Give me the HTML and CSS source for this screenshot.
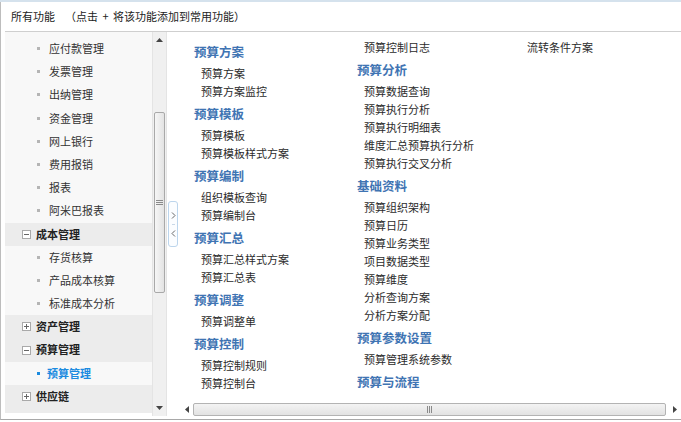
FILE: index.html
```html
<!DOCTYPE html>
<html>
<head>
<meta charset="utf-8">
<title>所有功能</title>
<link rel="stylesheet" href="styles.css">
</head>
<body>
<div class="page">
  <div class="backdrop"><div class="backdrop__panel"></div></div>
  <div class="dialog">
    <div class="header"><span class="header__title">所有功能</span><span class="header__hint">（点击&nbsp;+&nbsp;将该功能添加到常用功能）</span></div>
    <div class="main">
      <div class="sidebar">
        <div class="menu__item"><i class="dot"></i>应付款管理</div>
        <div class="menu__item"><i class="dot"></i>发票管理</div>
        <div class="menu__item"><i class="dot"></i>出纳管理</div>
        <div class="menu__item"><i class="dot"></i>资金管理</div>
        <div class="menu__item"><i class="dot"></i>网上银行</div>
        <div class="menu__item"><i class="dot"></i>费用报销</div>
        <div class="menu__item"><i class="dot"></i>报表</div>
        <div class="menu__item"><i class="dot"></i>阿米巴报表</div>
        <div class="menu__group"><svg class="fold" width="9" height="9" viewBox="0 0 9 9"><rect x="0.5" y="0.5" width="8" height="8" fill="#fff" stroke="#a9a9a9"/><path d="M2 4.5h5" stroke="#666"/></svg>成本管理</div>
        <div class="menu__item"><i class="dot"></i>存货核算</div>
        <div class="menu__item"><i class="dot"></i>产品成本核算</div>
        <div class="menu__item"><i class="dot"></i>标准成本分析</div>
        <div class="menu__group"><svg class="fold" width="9" height="9" viewBox="0 0 9 9"><rect x="0.5" y="0.5" width="8" height="8" fill="#fff" stroke="#a9a9a9"/><path d="M2 4.5h5M4.5 2v5" stroke="#666"/></svg>资产管理</div>
        <div class="menu__group"><svg class="fold" width="9" height="9" viewBox="0 0 9 9"><rect x="0.5" y="0.5" width="8" height="8" fill="#fff" stroke="#a9a9a9"/><path d="M2 4.5h5" stroke="#666"/></svg>预算管理</div>
        <div class="menu__item menu__item--active"><i class="dot"></i>预算管理</div>
        <div class="menu__group menu__group--last"><svg class="fold" width="9" height="9" viewBox="0 0 9 9"><rect x="0.5" y="0.5" width="8" height="8" fill="#fff" stroke="#a9a9a9"/><path d="M2 4.5h5M4.5 2v5" stroke="#666"/></svg>供应链</div>
      </div>
      <div class="vscroll">
        <div class="vscroll__btn"><svg width="7" height="4" viewBox="0 0 7 4"><path d="M0 4L3.5 0L7 4Z" fill="#444"/></svg></div>
        <div class="vscroll__track">
          <div class="vscroll__thumb"><svg width="7" height="5" viewBox="0 0 7 5"><path d="M0 0.5h7M0 2.5h7M0 4.5h7" stroke="#8a8a8a"/></svg></div>
        </div>
        <div class="vscroll__btn"><svg width="7" height="4" viewBox="0 0 7 4"><path d="M0 0L3.5 4L7 0Z" fill="#444"/></svg></div>
      </div>
      <div class="splitter">
        <div class="toggle">
          <svg width="5" height="7" viewBox="0 0 5 7"><path d="M1 0.5L4 3.5L1 6.5" fill="none" stroke="#666"/></svg>
          <i class="toggle__sep"></i>
          <svg width="5" height="7" viewBox="0 0 5 7"><path d="M4 0.5L1 3.5L4 6.5" fill="none" stroke="#666"/></svg>
        </div>
      </div>
      <div class="content">
        <div class="columns">
          <div class="col">
            <div class="col__title">预算方案</div>
            <div class="col__link">预算方案</div>
            <div class="col__link">预算方案监控</div>
            <div class="col__title">预算模板</div>
            <div class="col__link">预算模板</div>
            <div class="col__link">预算模板样式方案</div>
            <div class="col__title">预算编制</div>
            <div class="col__link">组织模板查询</div>
            <div class="col__link">预算编制台</div>
            <div class="col__title">预算汇总</div>
            <div class="col__link">预算汇总样式方案</div>
            <div class="col__link">预算汇总表</div>
            <div class="col__title">预算调整</div>
            <div class="col__link">预算调整单</div>
            <div class="col__title">预算控制</div>
            <div class="col__link">预算控制规则</div>
            <div class="col__link">预算控制台</div>
          </div>
          <div class="col">
            <div class="col__link">预算控制日志</div>
            <div class="col__title">预算分析</div>
            <div class="col__link">预算数据查询</div>
            <div class="col__link">预算执行分析</div>
            <div class="col__link">预算执行明细表</div>
            <div class="col__link">维度汇总预算执行分析</div>
            <div class="col__link">预算执行交叉分析</div>
            <div class="col__title">基础资料</div>
            <div class="col__link">预算组织架构</div>
            <div class="col__link">预算日历</div>
            <div class="col__link">预算业务类型</div>
            <div class="col__link">项目数据类型</div>
            <div class="col__link">预算维度</div>
            <div class="col__link">分析查询方案</div>
            <div class="col__link">分析方案分配</div>
            <div class="col__title">预算参数设置</div>
            <div class="col__link">预算管理系统参数</div>
            <div class="col__title">预算与流程</div>
          </div>
          <div class="col">
            <div class="col__link">流转条件方案</div>
          </div>
        </div>
        <div class="hscroll">
          <div class="hscroll__btn"><svg width="4" height="7" viewBox="0 0 4 7"><path d="M4 0L0 3.5L4 7Z" fill="#444"/></svg></div>
          <div class="hscroll__thumb"><svg width="5" height="7" viewBox="0 0 5 7"><path d="M0.5 0v7M2.5 0v7M4.5 0v7" stroke="#8a8a8a"/></svg></div>
          <div class="hscroll__btn hscroll__btn--end"><svg width="4" height="7" viewBox="0 0 4 7"><path d="M0 0L4 3.5L0 7Z" fill="#444"/></svg></div>
        </div>
      </div>
    </div>
  </div>
</div>
</body>
</html>
```

FILE: styles.css
```css
body {
	margin: 0;
	font-family: "Noto Sans CJK SC", "Noto Sans", sans-serif;
	color: #333;
	background: #fff;
}

.page {
	width: 681px;
	height: 420px;
	border-top: 2px solid #d5e2ed;
	display: flex;
	overflow: hidden;
}

.backdrop {
	width: 3px;
	background: #fff;
}
.backdrop__panel {
	margin-top: 113px;
	height: 80px;
	border-top: 1px solid #c9c9c9;
	background: #f4f4f4;
}

.dialog {
	flex: 1;
	display: flex;
	flex-direction: column;
	border-left: 1px solid #bdbdbd;
	height: 417px;
	border-bottom: 1px solid #a8a8a8;
	background: #fff;
}

.header {
	height: 29px;
	line-height: 29px;
	margin-left: 4px;
	padding-left: 6px;
	border-bottom: 1px solid #cfcfcf;
	font-size: 11px;
	color: #222;
}
.header__title {
	margin-right: 10px;
}
.header__hint {
	word-spacing: 2px;
}

.main {
	display: flex;
	height: 384px;
	margin-left: 4px;
}

/* left tree */
.sidebar {
	width: 147px;
	margin-bottom: 3px;
	padding-top: 5px;
	background: #f8f8f8;
	overflow: hidden;
	font-size: 11px;
}
.menu__item, .menu__group {
	height: 23.2px;
	line-height: 23.2px;
	display: flex;
	align-items: center;
	white-space: nowrap;
}
.menu__item {
	padding-left: 32px;
	color: #333;
}
.menu__item .dot {
	width: 3px;
	height: 3px;
	background: #b5b5b5;
	margin-right: 9px;
}
.menu__item--active {
	color: #1b8be0;
	font-weight: bold;
}
.menu__item--active .dot {
	background: #1b8be0;
	margin-right: 7px;
}
.menu__group {
	padding-left: 17px;
	background: #ececec;
	font-weight: bold;
	color: #222;
}
.menu__group--last {
	padding-bottom: 6px;
}
.fold {
	margin-right: 5px;
	flex: none;
}

/* vertical scroll */
.vscroll {
	width: 15px;
	display: flex;
	flex-direction: column;
	background: #f0f0f0;
	border-left: 1px solid #e4e4e4;
	border-right: 1px solid #e4e4e4;
	box-sizing: border-box;
}
.vscroll__btn {
	height: 16px;
	display: flex;
	align-items: center;
	justify-content: center;
}
.vscroll__track {
	flex: 1;
	padding-top: 64px;
}
.vscroll__thumb {
	height: 181px;
	box-sizing: border-box;
	margin: 0 1px;
	border: 1px solid #a9a9a9;
	border-radius: 2px;
	background: linear-gradient(to right, #f6f6f6, #e3e3e3);
	display: flex;
	align-items: center;
	justify-content: center;
}

.splitter {
	width: 11px;
	display: flex;
	align-items: center;
}
.toggle {
	width: 9px;
	height: 44px;
	margin-left: 1px;
	border: 1px solid #bcd5ec;
	border-radius: 3px;
	background: #fbfdff;
	display: flex;
	flex-direction: column;
	align-items: center;
	justify-content: center;
	gap: 5px;
}
.toggle__sep {
	width: 3px;
	height: 1px;
	background: #c8d8e8;
}

/* right panel */
.content {
	flex: 1;
	display: flex;
	flex-direction: column;
	background: #fff;
}
.columns {
	flex: 1;
	display: flex;
	padding: 6px 0 0 16px;
}
.col {
	width: 163px;
}
.col__title {
	padding: 5px 0 3px;
	line-height: 18px;
	font-size: 12.5px;
	font-weight: bold;
	color: #3f74b3;
}
.col__link {
	padding-left: 7px;
	line-height: 18px;
	font-size: 11px;
	color: #2b2b2b;
	white-space: nowrap;
}

.hscroll {
	height: 13px;
	margin-left: 2px;
	display: flex;
	background: #fff;
}
.hscroll__btn {
	width: 13px;
	display: flex;
	align-items: center;
	justify-content: center;
}
.hscroll__btn--end {
	width: 17px;
}
.hscroll__thumb {
	flex: 1;
	box-sizing: border-box;
	border: 1px solid #b3b3b3;
	border-radius: 2px;
	background: linear-gradient(to bottom, #f3f3f3, #e2e2e2);
	display: flex;
	align-items: center;
	justify-content: center;
}
```
